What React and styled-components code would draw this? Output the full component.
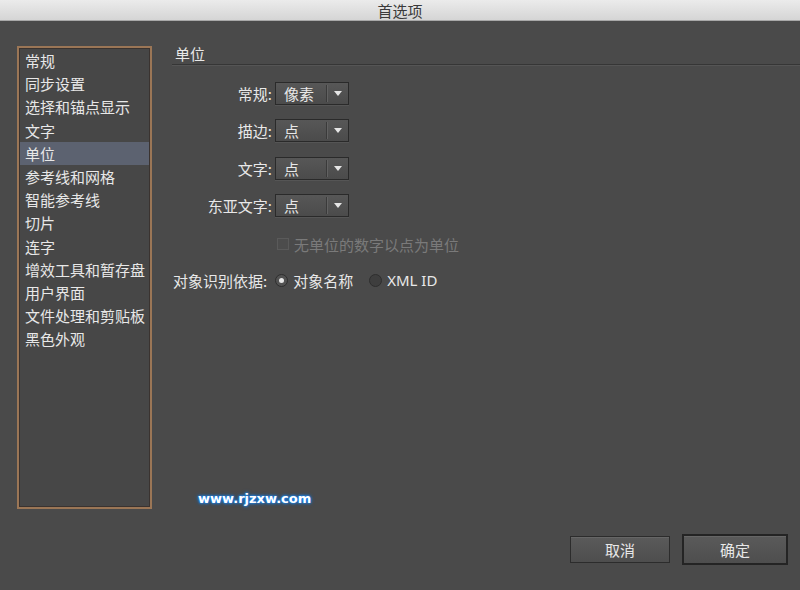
import React from "react";
import styled, { createGlobalStyle } from "styled-components";

const Global = createGlobalStyle`
  html, body { margin: 0; padding: 0; background: #4a4a4a; }
  body { font-family: "Noto Sans CJK SC", "Noto Sans", sans-serif; }
  * { box-sizing: border-box; }
`;

const Window = styled.div`
  width: 800px;
  height: 590px;
  background: #4a4a4a;
  display: flex;
  flex-direction: column;
  color: #e6e6e6;
  font-size: 15px;
`;

const TitleBar = styled.div`
  height: 21px;
  background: linear-gradient(#ebebeb, #d5d5d5);
  border-bottom: 1px solid #a8a8a8;
  display: flex;
  align-items: center;
  justify-content: center;
  color: #3a3a3a;
  font-size: 15px;
  line-height: 1;
`;

const Body = styled.div`
  flex: 1;
  display: flex;
  position: relative;
  padding: 25px 0 0 17px;
`;

const SideList = styled.div`
  width: 135px;
  height: 463px;
  border: 2px solid #9b7656;
  box-shadow: inset 0 0 0 1px #3a3330;
  background: #474747;
  padding: 1px 1px;
  display: flex;
  flex-direction: column;
`;

const Item = styled.div`
  height: 23.2px;
  line-height: 23px;
  padding-left: 5px;
  font-size: 15px;
  color: #e8e8e8;
  white-space: nowrap;
  background: ${(p) => (p.$active ? "#5c6270" : "transparent")};
`;

const Main = styled.div`
  flex: 1;
  padding-left: 23px;
  display: flex;
  flex-direction: column;
`;

const SectionTitle = styled.div`
  height: 19px;
  padding-left: 3px;
  line-height: 16px;
  font-size: 15px;
  color: #e8e8e8;
  border-bottom: 1px solid #363636;
  box-shadow: 0 1px 0 #555;
  margin-left: -3px;
`;

const Rows = styled.div`
  display: flex;
  flex-direction: column;
  gap: 14.4px;
  margin-top: 17px;
`;

const Row = styled.div`
  display: flex;
  align-items: center;
  height: 23px;
`;

const Label = styled.div`
  width: 100px;
  text-align: right;
  padding-right: 3px;
  font-size: 15px;
  color: #e8e8e8;
`;

const Select = styled.div`
  width: 74px;
  height: 23px;
  border: 1px solid #2a2a2a;
  background: linear-gradient(#575757, #4b4b4b);
  display: flex;
  align-items: center;
  box-shadow: 0 1px 0 #555;
`;

const SelectText = styled.div`
  flex: 1;
  padding-left: 8px;
  font-size: 15px;
  color: #e8e8e8;
  line-height: 1;
`;

const Divider = styled.div`
  width: 1px;
  height: 17px;
  background: #3a3a3a;
  box-shadow: 1px 0 0 #626262;
`;

const Arrow = styled.div`
  width: 21px;
  display: flex;
  justify-content: center;
  &::after {
    content: "";
    border-left: 4px solid transparent;
    border-right: 4px solid transparent;
    border-top: 5px solid #e6e6e6;
  }
`;

const CheckRow = styled.div`
  display: flex;
  align-items: center;
  margin-top: 17px;
  padding-left: 102px;
  height: 20px;
  color: #7a7a7a;
  font-size: 15px;
`;

const CheckBox = styled.div`
  width: 12px;
  height: 12px;
  border: 1px solid #5a5a5a;
  background: #4c4c4c;
  margin-right: 5px;
`;

const RadioRow = styled.div`
  display: flex;
  align-items: center;
  margin-top: 15px;
  margin-left: -2px;
  height: 22px;
  font-size: 15px;
  color: #e8e8e8;
`;

const Radio = styled.div`
  width: 13px;
  height: 13px;
  border-radius: 50%;
  border: 1px solid #2e2e2e;
  background: ${(p) => (p.$checked ? "#525252" : "#3e3e3e")};
  margin: 0 5px 0 ${(p) => p.$ml}px;
  display: flex;
  align-items: center;
  justify-content: center;
  &::after {
    content: "";
    width: 5px;
    height: 5px;
    border-radius: 50%;
    background: ${(p) => (p.$checked ? "#e8e8e8" : "transparent")};
  }
`;

const Latin = styled.span`
  font-family: "Noto Sans", sans-serif;
  font-size: 15px;
`;

const Watermark = styled.div`
  position: absolute;
  left: 198px;
  top: 470px;
  font-family: "DejaVu Sans", Verdana, sans-serif;
  font-weight: bold;
  font-size: 13px;
  color: #ffffff;
  text-shadow: 0 0 2px #1a8cff, 0 0 3px #1a8cff, 0 0 4px #0b6fd8;
`;

const Buttons = styled.div`
  position: absolute;
  right: 12px;
  bottom: 25px;
  display: flex;
  align-items: center;
  gap: 12px;
`;

const Button = styled.div`
  width: ${(p) => (p.$primary ? 106 : 100)}px;
  height: ${(p) => (p.$primary ? 31 : 27)}px;
  border: ${(p) => (p.$primary ? "2px solid #242424" : "1px solid #2c2c2c")};
  background: linear-gradient(#5a5a5a, #4e4e4e);
  box-shadow: inset 0 1px 0 #666;
  display: flex;
  align-items: center;
  justify-content: center;
  font-size: 15px;
  color: #e8e8e8;
`;

const items = [
  "常规",
  "同步设置",
  "选择和锚点显示",
  "文字",
  "单位",
  "参考线和网格",
  "智能参考线",
  "切片",
  "连字",
  "增效工具和暂存盘",
  "用户界面",
  "文件处理和剪贴板",
  "黑色外观",
];

const selects = [
  ["常规:", "像素"],
  ["描边:", "点"],
  ["文字:", "点"],
  ["东亚文字:", "点"],
];

export default function App() {
  return (
    <>
      <Global />
      <Window>
        <TitleBar>首选项</TitleBar>
        <Body>
          <SideList>
            {items.map((t) => (
              <Item key={t} $active={t === "单位"}>
                {t}
              </Item>
            ))}
          </SideList>
          <Main>
            <SectionTitle>单位</SectionTitle>
            <Rows>
              {selects.map(([l, v]) => (
                <Row key={l}>
                  <Label>{l}</Label>
                  <Select>
                    <SelectText>{v}</SelectText>
                    <Divider />
                    <Arrow />
                  </Select>
                </Row>
              ))}
            </Rows>
            <CheckRow>
              <CheckBox />
              无单位的数字以点为单位
            </CheckRow>
            <RadioRow>
              对象识别依据:
              <Radio $checked $ml={8} />
              对象名称
              <Radio $ml={16} />
              <Latin>XML ID</Latin>
            </RadioRow>
          </Main>
          <Watermark>www.rjzxw.com</Watermark>
          <Buttons>
            <Button>取消</Button>
            <Button $primary>确定</Button>
          </Buttons>
        </Body>
      </Window>
    </>
  );
}
